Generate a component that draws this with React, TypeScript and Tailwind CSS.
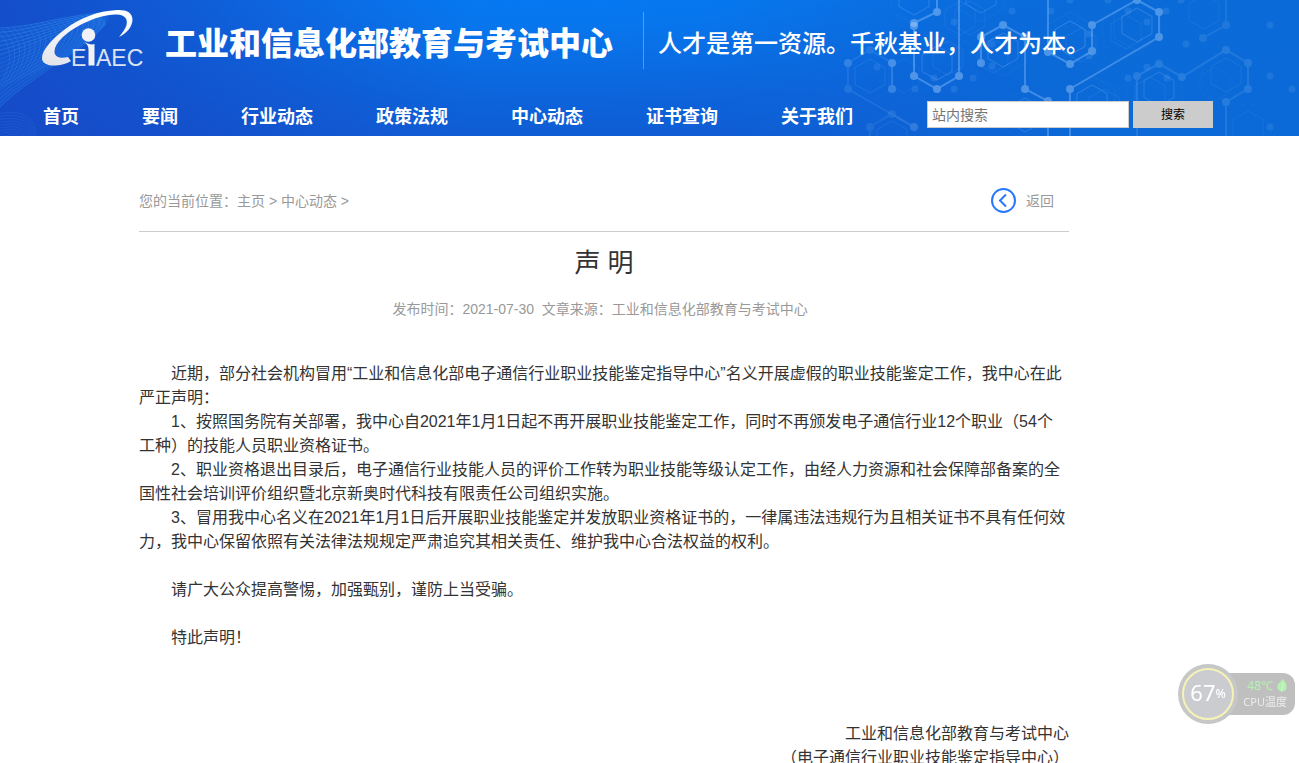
import React, { useState } from 'react';

const NAV_ITEMS = ['首页', '要闻', '行业动态', '政策法规', '中心动态', '证书查询', '关于我们'];

const PARAGRAPHS = [
  '近期，部分社会机构冒用“工业和信息化部电子通信行业职业技能鉴定指导中心”名义开展虚假的职业技能鉴定工作，我中心在此严正声明：',
  '1、按照国务院有关部署，我中心自2021年1月1日起不再开展职业技能鉴定工作，同时不再颁发电子通信行业12个职业（54个工种）的技能人员职业资格证书。',
  '2、职业资格退出目录后，电子通信行业技能人员的评价工作转为职业技能等级认定工作，由经人力资源和社会保障部备案的全国性社会培训评价组织暨北京新奥时代科技有限责任公司组织实施。',
  '3、冒用我中心名义在2021年1月1日后开展职业技能鉴定并发放职业资格证书的，一律属违法违规行为且相关证书不具有任何效力，我中心保留依照有关法律法规规定严肃追究其相关责任、维护我中心合法权益的权利。',
];

// Circuit lines of the banner: points and opacity
const CIRCUITS: { points: number[][]; opacity: number }[] = [
  { points: [[914, 23], [937, 12], [937, -6]], opacity: 0.4 },
  { points: [[914, 26], [914, 76], [937, 89], [959, 76], [959, -6]], opacity: 0.4 },
  { points: [[981, 63], [981, 37], [1003, 25], [1025, 37], [1025, 89], [1048, 101], [1048, 142]], opacity: 0.38 },
  { points: [[1048, -6], [1048, 52], [1070, 64], [1092, 51], [1092, 25], [1137, 0], [1159, 12], [1159, 37], [1070, 89], [1070, 142]], opacity: 0.38 },
  { points: [[1137, 142], [1137, 76], [1159, 64], [1182, 77], [1226, 50], [1248, 63], [1248, 89], [1226, 102], [1226, 142]], opacity: 0.16 },
  { points: [[1203, 38], [1226, 25], [1226, -6]], opacity: 0.12 },
  { points: [[892, 63], [892, 89]], opacity: 0.25 },
  { points: [[848, 63], [848, 89], [914, 127]], opacity: 0.12 },
  { points: [[848, 63], [870, 50], [892, 63]], opacity: 0.12 },
  { points: [[870, 140], [870, 127], [892, 114], [914, 127]], opacity: 0.1 },
];

const HEXAGONS = [
  [1070, 38, 0.32], [1137, 25, 0.28], [1003, 50, 0.26], [1092, 102, 0.28], [1159, 89, 0.22], [1226, 75, 0.12],
  [870, 76, 0.15], [937, 63, 0.28], [914, -2, 0.26], [981, -4, 0.24], [1025, 115, 0.24], [892, 138, 0.12],
  [1204, 12, 0.1], [1248, 128, 0.1], [1126, 32, 0.12], [1081, 45, 0.12], [993, 56, 0.12], [960, 18, 0.1],
  [948, 58, 0.12], [1150, 94, 0.12], [1104, 106, 0.12], [904, 76, 0.08], [970, 18, 0.1], [1215, 84, 0.06],
];

const DOTS = [
  [1012, 11], [954, 22], [954, 89], [915, 89], [934, 78], [877, 67], [992, 44], [992, 66], [973, 78], [1051, 11],
  [1070, 0], [1108, 0], [1128, 11], [1147, 22], [1166, 11], [1181, 0], [1089, 34], [1089, 56], [1128, 78],
  [1147, 67], [1167, 78], [1186, 44], [1270, 25], [1270, 76], [1292, 89], [1270, 127],
];

function hexPoints(x: number, y: number, r: number) {
  const w = Math.round(r * 0.87);
  return `${x},${y - r} ${x + w},${y - r / 2} ${x + w},${y + r / 2} ${x},${y + r} ${x - w},${y + r / 2} ${x - w},${y - r / 2}`;
}

function mix(a: number, b: number, t: number) {
  return Math.round((a + (b - a) * t) * 10) / 10;
}

function BannerPattern() {
  const steps = Array.from({ length: 19 }, (_, i) => i / 18);
  return (
    <svg className="absolute top-0 left-0 h-[136px] w-[1299px]" viewBox="0 0 1299 136" aria-hidden="true">
      <path d="M-4 28 C30 28 60 16 100 13 C116 14 108 26 94 36 C70 58 24 82 -4 112 Z" fill="#1f8cf5" fillOpacity="0.16" />
      <g fill="none" stroke="#3fa4fa">
        {steps.map(t => (
          <path
            key={`a${t}`}
            d={`M-4 ${mix(28, 112, t)} C ${mix(30, 18, t)} ${mix(28, 84, t)}, ${mix(60, 66, t)} ${mix(16, 64, t)}, ${mix(100, 106, t)} ${mix(13, 24, t)}`}
            strokeOpacity={mix(0.3, 0.16, t)}
          />
        ))}
        {steps.map(t => (
          <path
            key={`b${t}`}
            d={`M${mix(-4, 98, t)} ${mix(30, 13, t)} C ${mix(14, 116, t)} ${mix(46, 18, t)}, ${mix(14, 96, t)} ${mix(66, 34, t)}, ${mix(-4, 72, t)} ${mix(90, 56, t)}`}
            strokeOpacity="0.22"
          />
        ))}
        {steps.slice(0, 9).map(t => (
          <path key={`c${t}`} d={`M-4 ${mix(114, 168, t)} Q ${mix(38, 2, t)} ${mix(106, 160, t)}, ${mix(36, 0, t)} 140`} strokeOpacity="0.14" />
        ))}
      </g>
      <g stroke="#8cc0ff" fill="none">
        {HEXAGONS.map(([x, y, o]) => (
          <polygon key={`${x}-${y}`} points={hexPoints(x, y, 17)} strokeOpacity={o} />
        ))}
        {HEXAGONS.map(([x, y, o]) => (
          <polygon key={`o${x}-${y}`} points={hexPoints(x, y, 26)} strokeOpacity={o / 4} />
        ))}
      </g>
      {CIRCUITS.map((c, i) => (
        <g key={i} opacity={c.opacity}>
          <polyline points={c.points.map(p => p.join(',')).join(' ')} fill="none" stroke="#8fc3ff" strokeWidth="2" />
          {c.points.map(([x, y]) => (
            <circle key={`${x}-${y}`} cx={x} cy={y} r="4" fill="#b4d8ff" />
          ))}
        </g>
      ))}
      <g fill="#8cc0ff" opacity="0.14">
        {DOTS.map(([x, y]) => (
          <circle key={`${x}-${y}`} cx={x} cy={y} r="3.5" />
        ))}
      </g>
    </svg>
  );
}

function Logo() {
  return (
    <svg className="h-[72px] w-[108px] shrink-0" viewBox="41 8 108 72" role="img" aria-label="CEIAEC">
      <defs>
        <linearGradient id="swoosh" x1="0" y1="0" x2="0" y2="1">
          <stop offset="0" stopColor="#ffffff" />
          <stop offset="1" stopColor="#e2e4ea" />
        </linearGradient>
      </defs>
      <path
        fill="url(#swoosh)"
        d="M119 37 C127 33 132 27 132.500 20 C132.500 12 126 9.500 117 10 C98 11 79 18 64 30 C52 39 42 50 42 58 C42 64 49 66 56 65.500 C62 65 67 63.500 71 61 L68 57 C60 59 54 57 54.500 51 C55 43 66 32 82 24 C95 17.500 108 14 117 14.500 C125 15 128 19 126.500 25 C125.500 29 122 33 119 37 Z"
      />
      <circle cx="88.500" cy="35" r="6.800" fill="#f1f2f5" />
      <path fill="#f1f2f5" d="M84 42 C88 44 92 45 94.500 44 L94.500 65.500 L88.500 65.500 L88.500 50 C88.500 46 87 44 84 42 Z" />
      <g fill="#dbe3f3" fontFamily="Liberation Sans, sans-serif" fontSize="23">
        <text x="71" y="65.500">E</text>
        <text x="96" y="65.500">AEC</text>
      </g>
    </svg>
  );
}

function Leaf() {
  return (
    <svg className="h-[14px] w-[10px]" viewBox="0 0 10 14" aria-hidden="true">
      <path fill="#b5f0b0" d="M5.500 0 C9 3 10 6 9.500 9 C9 11.500 7 12.500 5 12.500 L4 14 L4 12 C1 11.500 0 9 .5 6.500 C1 4 4 3 5.500 0 Z" />
      <path stroke="#d7f7d4" strokeWidth=".8" fill="none" d="M6 4 C6 7 5.500 9 4.300 12" />
    </svg>
  );
}

function CpuWidget() {
  return (
    <aside className="fixed right-1 bottom-[39px] flex items-center font-['Noto_Sans','Noto_Sans_CJK_SC',sans-serif]">
      <div className="z-10 flex size-[60px] items-center justify-center rounded-full bg-[#c6c7c7]">
        <div className="flex size-[52px] items-center justify-center rounded-full border-2 border-[#f6f2b8] bg-[#cbccd0] pb-1 text-white">
          <span className="text-[22px] leading-6">67</span>
          <span className="pt-1 text-xs font-medium">%</span>
        </div>
      </div>
      <div className="-ml-4 flex h-[42px] w-[73px] flex-col items-end justify-center rounded-r-xl bg-[#bfbfbf] pr-2">
        <div className="flex items-center gap-1 text-xs leading-4 text-[#b5f0b0]">
          48℃
          <Leaf />
        </div>
        <div className="text-[11px] leading-4 text-[#ececec]">CPU温度</div>
      </div>
    </aside>
  );
}

export default function App() {
  const [keyword, setKeyword] = useState('');

  return (
    <div lang="zh-CN" className="min-h-screen bg-white font-['Liberation_Sans','Noto_Sans_CJK_SC',sans-serif] text-[#333]">
      <header className="relative overflow-hidden bg-[radial-gradient(ellipse_900px_230px_at_560px_-50px,#007ffa_0%,#0875ec_35%,#0d62d9_68%,#1455cd_100%)]">
        <div className="absolute inset-0 bg-[linear-gradient(90deg,#1745c4b3_0%,#1745c400_36%,#0a6cd800_55%,#0a6cd8e6_85%)]"></div>
        <BannerPattern />
        <div className="relative flex h-[88px] items-center pl-[41px] text-white">
          <Logo />
          <h1 className="ml-4 w-[462px] text-[32px] leading-10 font-black whitespace-nowrap">工业和信息化部教育与考试中心</h1>
          <div className="mt-3 ml-4 h-[57px] w-px shrink-0 self-start bg-white/30"></div>
          <p className="ml-[14px] text-2xl font-medium whitespace-nowrap">人才是第一资源。千秋基业，人才为本。</p>
        </div>
        <div className="relative flex h-12 items-start pt-[13px] pl-[43px]">
          <nav className="flex gap-[63px] pt-0.5 text-lg font-bold whitespace-nowrap text-white">
            {NAV_ITEMS.map(item => (
              <a key={item} href="#">{item}</a>
            ))}
          </nav>
          <form className="ml-[74px] flex gap-1" onSubmit={e => e.preventDefault()}>
            <input
              type="text"
              aria-label="站内搜索"
              placeholder="站内搜索"
              value={keyword}
              onChange={e => setKeyword(e.target.value)}
              className="h-[27px] w-[202px] border border-[#ccc] bg-white px-1 text-sm text-[#333] placeholder:text-[#757575]"
            />
            <button type="submit" className="h-[27px] w-20 bg-[#ccc] text-xs text-black">搜索</button>
          </form>
        </div>
      </header>

      <main className="max-w-[1208px] px-[139px] pt-9">
        <div className="flex h-[60px] items-start justify-between border-b border-[#ccc] pt-4 pr-[15px] text-sm leading-[26px] text-[#999]">
          <div>
            您的当前位置：<a href="#">主页</a> &gt; <a href="#">中心动态</a> &gt;
          </div>
          <a href="#" className="flex items-center gap-[9px]">
            <svg className="size-[26px]" viewBox="0 0 26 26" fill="none" stroke="#2878ff" strokeWidth="2" aria-hidden="true">
              <circle cx="12.500" cy="12.500" r="11.500" />
              <path d="M15 6.500 L9 12.500 L15 18.500" />
            </svg>
            返回
          </a>
        </div>

        <article>
          <h2 className="mt-[11px] text-center text-[26px] leading-10">声 明</h2>
          <p className="mt-[14px] text-center text-sm leading-6 text-[#999]">
            发布时间：2021-07-30&nbsp; 文章来源：工业和信息化部教育与考试中心&nbsp;&nbsp;
          </p>
          <div className="mt-[41px] text-base leading-6">
            {PARAGRAPHS.map(text => (
              <p key={text} className="pr-0.5 indent-8">{text}</p>
            ))}
            <p className="mt-6 indent-8">请广大公众提高警惕，加强甄别，谨防上当受骗。</p>
            <p className="mt-6 indent-8">特此声明！</p>
            <div className="mt-[72px] text-right">
              <p>工业和信息化部教育与考试中心</p>
              <p>（电子通信行业职业技能鉴定指导中心）</p>
            </div>
          </div>
        </article>
      </main>

      <CpuWidget />
    </div>
  );
}
